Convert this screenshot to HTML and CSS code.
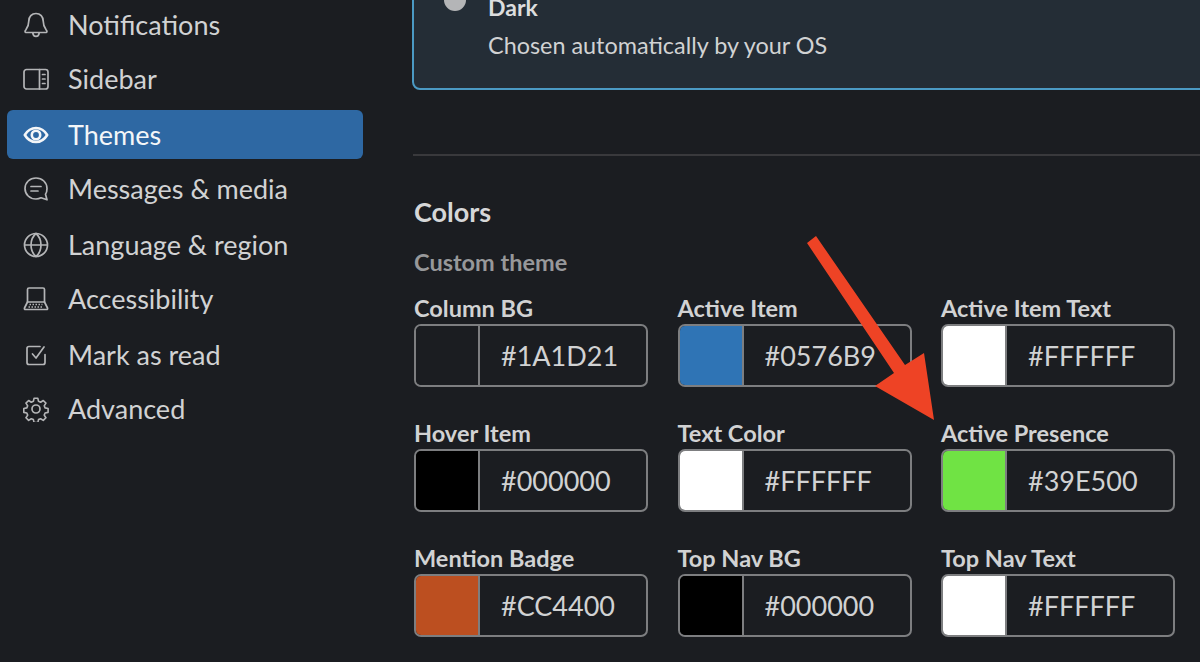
FILE: index.html
```html
<!DOCTYPE html>
<html lang="en">
<head>
  <meta charset="UTF-8">
  <title>Preferences - Themes</title>
  <link rel="stylesheet" href="styles.css">
</head>
<body>
  <div class="page">
    <nav class="sidebar">
      <a class="nav-item">
        <svg class="nav-icon" viewBox="0 0 26 26"><path d="M13 1.500c-4.300 0-7.200 3.300-7.200 7.600 0 3.600-.8 6-2.900 8.700-.9 1.100-1.300 2.400-.2 2.700h20.600c1.100-.3.700-1.600-.2-2.700-2.100-2.700-2.900-5.100-2.900-8.700 0-4.300-2.900-7.600-7.200-7.600z"/><path d="M9.800 20.800c.2 2.200 1.500 3.500 3.200 3.500s3-1.300 3.200-3.500"/></svg>
        <span>Notifications</span>
      </a>
      <a class="nav-item">
        <svg class="nav-icon" viewBox="0 0 26 26"><rect x="1" y="3.500" width="24" height="19.500" rx="2.500"/><path d="M16.500 3.500v19.500M19.500 8.500h2.500M19.500 13h2.500M19.500 17.500h2.500"/></svg>
        <span>Sidebar</span>
      </a>
      <a class="nav-item active">
        <svg class="nav-icon" viewBox="0 0 26 26"><path class="thick" d="M1.800 13C4.500 8.500 8.500 6 13 6s8.500 2.500 11.200 7c-2.700 4.500-6.700 7-11.200 7S4.500 17.500 1.800 13z"/><circle class="thick" cx="13" cy="13" r="4.200"/></svg>
        <span>Themes</span>
      </a>
      <a class="nav-item">
        <svg class="nav-icon" viewBox="0 0 26 26"><path d="M13 2C6.800 2 2 6.500 2 12.500S6.800 23 13 23c1.900 0 3.500-.4 5-1.200l6 2-1.500-5.500c1.100-1.500 1.500-3.500 1.500-5.800C24 6.500 19.200 2 13 2z"/><path d="M8 10.500h10M8 15h7"/></svg>
        <span>Messages &amp; media</span>
      </a>
      <a class="nav-item">
        <svg class="nav-icon" viewBox="0 0 26 26"><circle cx="13" cy="13" r="11.500"/><path d="M1.800 13h22.400M13 1.500c-3.500 3-5 7-5 11.500s1.500 8.500 5 11.500c3.500-3 5-7 5-11.500s-1.500-8.500-5-11.500z"/></svg>
        <span>Language &amp; region</span>
      </a>
      <a class="nav-item">
        <svg class="nav-icon" viewBox="0 0 26 26"><path d="M4.500 16V3.500C4.500 2.500 5 2 6 2h14c1 0 1.500.5 1.500 1.500V16"/><path d="M4.500 16h17l3 6c.3.8 0 1.500-1 1.500H2.500c-1 0-1.300-.7-1-1.500z"/><path class="dots" d="M6.500 18.500h13M5.500 21h15"/></svg>
        <span>Accessibility</span>
      </a>
      <a class="nav-item">
        <svg class="nav-icon" viewBox="0 0 26 26"><path d="M22 12.500v8c0 1.300-.7 2-2 2H6c-1.300 0-2-.7-2-2v-14c0-1.300.7-2 2-2h11"/><path d="M9.500 12l3.500 4 8-11"/></svg>
        <span>Mark as read</span>
      </a>
      <a class="nav-item">
        <svg class="nav-icon" viewBox="0 0 26 26"><path d="M11 1.800h4l.7 3.200 2.200.9 2.800-1.800 2.800 2.800-1.800 2.800.9 2.200 3.200.7v4l-3.200.7-.9 2.200 1.800 2.800-2.800 2.800-2.800-1.800-2.200.9-.7 3.200h-4l-.7-3.200-2.200-.9-2.800 1.800-2.800-2.800 1.800-2.800-.9-2.200-3.200-.7v-4l3.200-.7.900-2.200-1.800-2.800 2.800-2.800 2.800 1.800 2.200-.9z" transform="translate(.6 .6) scale(.95)"/><circle cx="13" cy="13" r="4"/></svg>
        <span>Advanced</span>
      </a>
    </nav>

    <main class="content">
      <div class="theme-card">
        <span class="radio"></span>
        <div>
          <div class="theme-name">Dark</div>
          <div class="theme-desc">Chosen automatically by your OS</div>
        </div>
      </div>

      <hr class="divider">

      <h3 class="section-title">Colors</h3>
      <div class="section-sub">Custom theme</div>

      <div class="color-grid">
        <div class="field">
          <label>Column BG</label>
          <div class="color-box"><span class="swatch sw-column"></span><span class="hex">#1A1D21</span></div>
        </div>
        <div class="field">
          <label>Active Item</label>
          <div class="color-box"><span class="swatch sw-blue"></span><span class="hex">#0576B9</span></div>
        </div>
        <div class="field">
          <label>Active Item Text</label>
          <div class="color-box"><span class="swatch sw-white"></span><span class="hex">#FFFFFF</span></div>
        </div>
        <div class="field">
          <label>Hover Item</label>
          <div class="color-box"><span class="swatch sw-black"></span><span class="hex">#000000</span></div>
        </div>
        <div class="field">
          <label>Text Color</label>
          <div class="color-box"><span class="swatch sw-white"></span><span class="hex">#FFFFFF</span></div>
        </div>
        <div class="field">
          <label>Active Presence</label>
          <div class="color-box"><span class="swatch sw-green"></span><span class="hex">#39E500</span></div>
        </div>
        <div class="field">
          <label>Mention Badge</label>
          <div class="color-box"><span class="swatch sw-orange"></span><span class="hex">#CC4400</span></div>
        </div>
        <div class="field">
          <label>Top Nav BG</label>
          <div class="color-box"><span class="swatch sw-black"></span><span class="hex">#000000</span></div>
        </div>
        <div class="field">
          <label>Top Nav Text</label>
          <div class="color-box"><span class="swatch sw-white"></span><span class="hex">#FFFFFF</span></div>
        </div>
      </div>
    </main>

    <svg class="arrow" viewBox="0 0 1200 662"><polygon points="807,243 816,236 905,365 924,353 934,420 875,386 894,373"/></svg>
  </div>
</body>
</html>
```

FILE: styles.css
```css
* {
  box-sizing: border-box;
}
html, body {
  margin: 0;
  padding: 0;
  height: 100%;
  overflow: hidden;
}
body {
  background: #1b1d21;
  color: #d1d2d3;
  font-family: Lato, "Open Sans", sans-serif;
}
.page {
  position: relative;
  display: flex;
  height: 662px;
  overflow: hidden;
}

/* left menu */
.sidebar {
  width: 413px;
  flex: none;
  padding: 0 50px 0 7px;
  display: flex;
  flex-direction: column;
  gap: 6px;
}
.nav-item {
  display: flex;
  align-items: center;
  height: 49px;
  padding-left: 16px;
  border-radius: 6px;
  font-size: 27px;
  color: #d1d2d3;
}
/* rows alternate 54/56px in the reference */
.nav-item:nth-child(even) {
  margin-top: -1px;
  margin-bottom: 1px;
}
.nav-item.active {
  background: #2e68a3;
  color: #f4f6f8;
}
.nav-icon {
  width: 26px;
  height: 26px;
  margin-right: 19px;
  flex: none;
  fill: none;
  stroke: #b4b5b7;
  stroke-width: 1.7;
  stroke-linejoin: round;
  stroke-linecap: round;
}
.active .nav-icon {
  stroke: #f4f6f8;
}
.nav-icon .thick {
  stroke-width: 2.6;
}
.nav-icon .dots {
  stroke-width: 1.3;
  stroke-dasharray: 1.500 1.500;
  stroke-linecap: butt;
}

/* right side */
.content {
  flex: 1;
  min-width: 0;
}
.theme-card {
  display: flex;
  gap: 22px;
  height: 111px;
  margin: -21px -20px 0 -1px;
  padding: 11px 0 0 30px;
  background: #242d36;
  border: 2px solid #4b9ac4;
  border-radius: 8px;
}
.radio {
  width: 22px;
  height: 22px;
  margin-top: -3px;
  flex: none;
  border-radius: 50%;
  background: #b4b5b7;
}
.theme-name {
  font-size: 23px;
  font-weight: 700;
  line-height: 30px;
  color: #dcddde;
}
.theme-desc {
  font-size: 23.400px;
  line-height: 30px;
  margin-top: 8px;
}
.divider {
  height: 2px;
  border: 0;
  margin: 64px 0 0 0;
  background: #39393c;
}
.section-title {
  margin: 41px 0 0 1px;
  font-size: 27px;
  line-height: 30px;
  font-weight: 700;
  color: #d6d7d8;
}
.section-sub {
  margin: 20px 0 0 1px;
  font-size: 23.500px;
  line-height: 30px;
  font-weight: 700;
  color: #97989a;
}
.color-grid {
  display: grid;
  grid-template-columns: repeat(3, 234px);
  column-gap: 29.500px;
  row-gap: 31px;
  margin: 16px 0 0 1px;
}
.field label {
  display: block;
  font-size: 23.500px;
  line-height: 31px;
  font-weight: 700;
  color: #d1d2d3;
}
.color-box {
  display: flex;
  align-items: center;
  height: 63px;
  border: 2px solid #7d7e80;
  border-radius: 7px;
  overflow: hidden;
}
.swatch {
  width: 64px;
  height: 100%;
  flex: none;
  border-right: 2px solid #7d7e80;
}
.hex {
  margin-left: 21px;
  font-size: 27px;
  color: #d1d2d3;
}
.sw-column { background: #1b1d21; }
.sw-blue { background: #2f74b5; }
.sw-white { background: #ffffff; }
.sw-black { background: #000000; }
.sw-green { background: #70e344; }
.sw-orange { background: #bc4f20; }

/* annotation drawn over the screenshot */
.arrow {
  position: absolute;
  left: 0;
  top: 0;
  width: 1200px;
  height: 662px;
  pointer-events: none;
}
.arrow polygon {
  fill: #ee4325;
}
```
